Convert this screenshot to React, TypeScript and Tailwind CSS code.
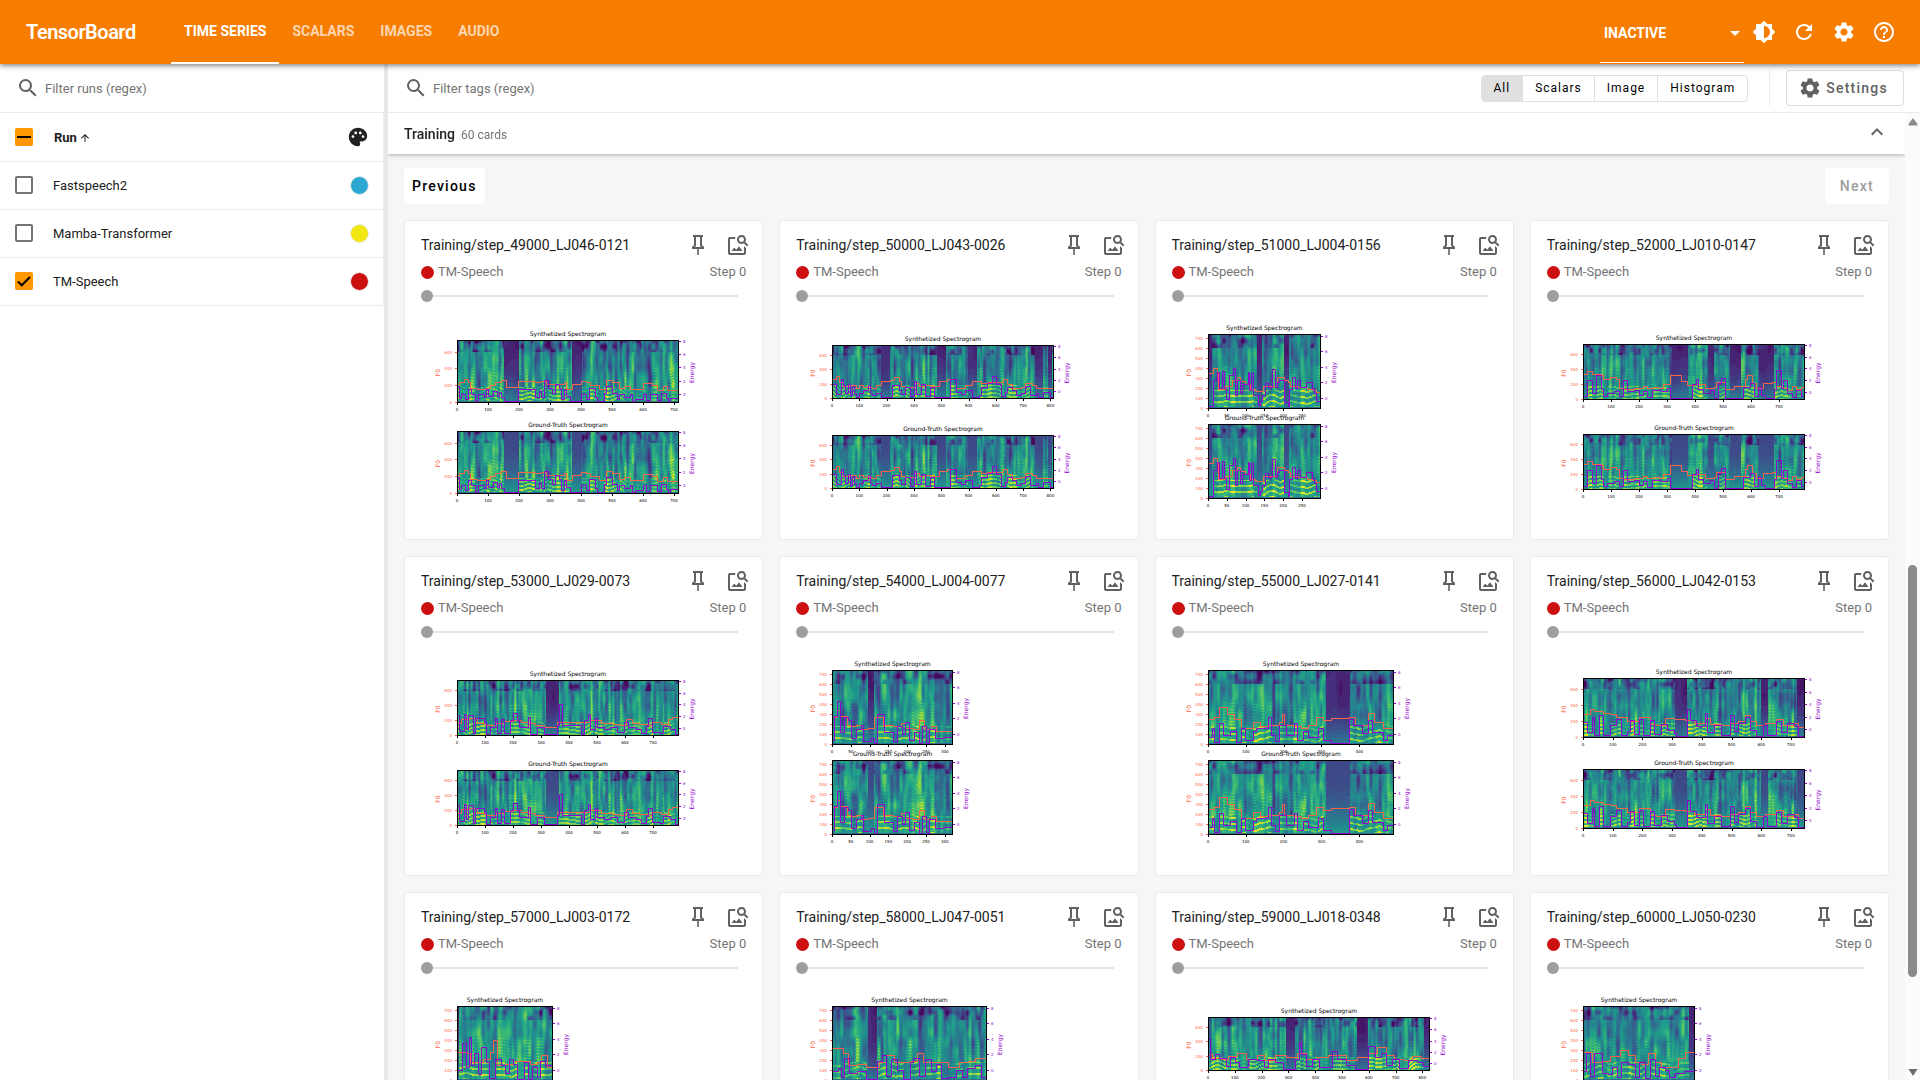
import { useMemo } from "react";
import {
  MdArrowDropDown,
  MdArrowUpward,
  MdBrightness6,
  MdExpandLess,
  MdHelpOutline,
  MdPalette,
  MdRefresh,
  MdSearch,
  MdSettings,
} from "react-icons/md";

/* ---------- spectrogram drawing ---------- */

const VIRIDIS = [
  [68, 1, 84],
  [72, 40, 120],
  [62, 73, 137],
  [49, 104, 142],
  [38, 130, 142],
  [31, 158, 137],
  [53, 183, 121],
  [110, 206, 88],
  [181, 222, 43],
  [253, 231, 37],
];
const LEVELS = 26;

function colorAt(t: number): string {
  const p = Math.min(0.9999, Math.max(0, t)) * (VIRIDIS.length - 1);
  const i = Math.floor(p);
  const f = p - i;
  const c = VIRIDIS[i].map((v, k) => Math.round(v + (VIRIDIS[i + 1][k] - v) * f));
  return `rgb(${c.join(",")})`;
}

function hash(x: number, y: number, seed: number): number {
  const s = Math.sin(x * 127.1 + y * 311.7 + seed * 74.7) * 43758.5453;
  return s - Math.floor(s);
}

function noise(x: number, y: number, seed: number): number {
  const xi = Math.floor(x);
  const yi = Math.floor(y);
  const fx = x - xi;
  const fy = y - yi;
  const u = fx * fx * (3 - 2 * fx);
  const v = fy * fy * (3 - 2 * fy);
  const a = hash(xi, yi, seed) * (1 - u) + hash(xi + 1, yi, seed) * u;
  const b = hash(xi, yi + 1, seed) * (1 - u) + hash(xi + 1, yi + 1, seed) * u;
  return a * (1 - v) + b * v;
}

type Point = [number, number];

function parse(series: string): Point[] {
  return series.split(";").map((p) => p.split(",").map(Number) as Point);
}

function valueAt(points: Point[], x: number): number {
  let v = points[0][1];
  for (const p of points) {
    if (p[0] > x) break;
    v = p[1];
  }
  return v;
}

function spectrogramPaths(w: number, h: number, seed: number, quiet: Point[], energy: Point[], truth: boolean): string[] {
  const paths: string[] = Array(LEVELS).fill("");
  const scale = h > 70 ? 1.3 : 1;
  for (let x = 0; x < w; x++) {
    const px = (x / w) * 100;
    const dark = quiet.some(([a, b]) => px >= a && px < b);
    const e = valueAt(energy, px);
    const column = noise(x / (2 * scale), 0.5, seed + 3);
    const broad = noise(x / (8 * scale), 0.5, seed + 9);
    const voiced = Math.min(1, e / 18) * (0.55 + 0.45 * noise(x / 5, 3.5, seed + 14));
    const bend = Math.round(noise(x / 9, 1.5, seed + 12) * 8);
    let runStart = 0;
    let runLevel = -1;
    for (let y = 0; y <= h; y++) {
      let level = -2;
      if (y < h) {
        const t = 1 - y / h;
        let v: number;
        if (dark) {
          v = truth ? 0.19 + hash(x, y, seed) * 0.05 : 0.05 + noise(x / 6, y / 20, seed) * 0.08;
          v += Math.pow(1 - t, 2.6) * 0.36;
        } else {
          v = 0.3 + column * 0.32 + broad * 0.12 - t * 0.08;
          v += (noise(x / (2.4 * scale), y / 22, seed + 5) - 0.5) * 0.42;
          v += (noise(x / (4 * scale), y / 9, seed + 6) - 0.5) * 0.2;
          if (t > 0.82) v -= Math.max(0, noise(x / (4 * scale), y / 6, seed + 8) - 0.4) * 0.7;
          if (t > 0.24 && t < 0.58 && column > 0.55 && (y + bend) % 3 === 0) v += 0.08;
          if (t < 0.26) {
            const period = h > 70 ? 6 : 4;
            const stripe = (y + bend) % period < 2;
            v = v * 0.55 + 0.2 + (stripe ? 0.4 : 0.04) * voiced;
            if (t < 0.12) v += 0.05 * voiced;
          }
          if (truth) v += (hash(x, y, seed + 2) - 0.5) * 0.08 + 0.02;
        }
        if (t < 0.035) v = 0.28 + column * 0.15;
        level = Math.max(0, Math.min(LEVELS - 1, Math.floor(v * LEVELS)));
      }
      if (level !== runLevel) {
        if (runLevel >= 0) paths[runLevel] += `M${x} ${runStart}h1V${y}h-1z`;
        runStart = y;
        runLevel = level;
      }
    }
  }
  return paths;
}

function stepPath(points: Point[], w: number, h: number, floor = 0): string {
  let d = "";
  points.forEach(([x, y], i) => {
    const px = Math.round((x / 100) * w) + 0.5;
    const py = Math.round(h - (Math.max(floor, y) / 100) * h) - 0.5;
    d += i === 0 ? `M${px} ${py}` : `H${px}V${py}`;
  });
  return `${d}H${w}`;
}

interface PlotProps {
  title: string;
  top: number;
  width: number;
  height: number;
  seed: number;
  quiet: Point[];
  f0: Point[];
  energy: Point[];
  unit: number;
  step: number;
  truth?: boolean;
}

const PLOT_LEFT = 36;

function Plot({ title, top, width: w, height: h, seed, quiet, f0, energy, unit, step, truth = false }: PlotProps) {
  const paths = useMemo(() => spectrogramPaths(w, h, seed, quiet, energy, truth), [w, h, seed, quiet, energy, truth]);
  const fTicks = h > 70 ? [0, 100, 200, 300, 400, 500, 600, 700] : [0, 200, 400, 600];
  const xTicks = Array.from({ length: Math.floor(w / unit - 0.1) + 1 }, (_, i) => i);
  return (
    <g transform={`translate(${PLOT_LEFT} ${top})`} fontFamily="DejaVu Sans, sans-serif">
      <text x={w / 2} y={-4} textAnchor="middle" fontSize={6} fill="#000">
        {title}
      </text>
      <g shapeRendering="crispEdges">
        {paths.map((d, i) => (d ? <path key={i} d={d} fill={colorAt((i + 0.5) / LEVELS)} /> : null))}
      </g>
      <path d={stepPath(f0, w, h)} fill="none" stroke="#ff6347" strokeWidth={1} />
      <path d={stepPath(energy, w, h, 1)} fill="none" stroke="#9400d3" strokeWidth={1} />
      <rect x={0.5} y={0.5} width={w - 1} height={h - 1} fill="none" stroke="#000" strokeWidth={1} />
      {fTicks.map((v) => {
        const y = Math.round(h - (v / 750) * h);
        return (
          <g key={v}>
            <path d={`M-2 ${y - 0.5}h2`} stroke="#ff6347" />
            <text x={-5} y={y + 1} textAnchor="end" fontSize={4} fill="#ff6347">
              {v}
            </text>
          </g>
        );
      })}
      {[0, 2, 4, 6, 8].map((v) => {
        const y = Math.round(h * (0.85 - v * 0.1035));
        return (
          <g key={v}>
            <path d={`M${w} ${y + 0.5}h2`} stroke="#9400d3" />
            <text x={w + 4} y={y + 2} fontSize={4} fill="#9400d3">
              {v}
            </text>
          </g>
        );
      })}
      {xTicks.map((i) => (
        <g key={i}>
          <path d={`M${Math.round(i * unit) + 0.5} ${h}v2`} stroke="#000" />
          <text x={i * unit} y={h + 8} textAnchor="middle" fontSize={4} fill="#000">
            {i * step}
          </text>
        </g>
      ))}
      <text transform={`translate(-17 ${h / 2 + 1}) rotate(-90)`} textAnchor="middle" fontSize={6} fill="#ff6347">
        F0
      </text>
      <text transform={`translate(${w + 15} ${h / 2 + 1}) rotate(-90)`} textAnchor="middle" fontSize={6} fill="#9400d3">
        Energy
      </text>
    </g>
  );
}

/* ---------- data ---------- */

interface CardData {
  tag: string;
  width: number;
  top: number;
  height: number;
  top2: number;
  unit: number;
  step: number;
  quiet: string;
  f0: string;
  energy: string;
}

const CARDS: CardData[] = [
  {
    tag: "Training/step_49000_LJ046-0121",
    width: 222, top: 28, height: 63, top2: 119, unit: 31, step: 100,
    quiet: "21,27.5;51.5,56",
    f0: "0,28;1,32;3,37;5,31;6,22;9,21;13,22;15,27;17,32;20,35;22,24;27.5,33;35,31;38,34;40,29;48,32;49,20;52,29;56,34;58,32;60,27;64,20;67,35;70,31;73,23;75,26;78,21;84,30;88,27;90,19;93,26;94.5,19",
    energy: "0,25;1,6;2,12;3.5,4;5,20;6.5,12;8,2;9.5,12;12,8;13,20;14,10;16,18;18,10;19,16;20,8;21,1;27.5,21;35,8;37,18;38,8;39,35;41,22;43,14;44,28;46,22;47,5;48,20;49,10;51,0.5;56,12;58,4;59.5,22;62,8;63,2;66,14;67,25;70,14;72,4;73,12;75,8;78,12;79,2;80,5;84,12;85,3;87,12;90,3;92,15;94,6;95,2;96,7",
  },
  {
    tag: "Training/step_50000_LJ043-0026",
    width: 222, top: 33, height: 54, top2: 123, unit: 27.3, step: 100,
    quiet: "22,26;47,51;61,65;91,95;97,99",
    f0: "0,36;2,40;3,30;5,22;8,24;11,18;12,24;14,20;18,19;20,24;22,32;26,33;28,38;30,32;31,22;33,20;37,27;39,22;42,24;45,22;48,32;52,36;56,19;60,24;63,31;67,28;70,30;75,30;77,36;79,26;81,19;85,20;87,28;90,24;92,19",
    energy: "0,26;2,8;4,35;5,25;6,10;7,26;8,5;9,22;10,10;11,1;12,10;14,14;16,24;17,10;18,5;20,10;22,0.5;26,2;27,24;30,14;31,8;33,20;35,4;37,32;38,8;40,26;42,4;44,20;46,2;51,1;53,36;56,12;58,8;60,14;63,1;66,5;67,20;70,28;72,40;74,26;76,3;78,12;79,20;81,14;83,5;85,10;87,22;89,5;92,10;93,0;95,12;98,0",
  },
  {
    tag: "Training/step_51000_LJ004-0156",
    width: 113, top: 22, height: 75, top2: 112, unit: 18.8, step: 50,
    quiet: "0,3;43,47;67,71",
    f0: "0,47;4,53;8,47;9,26;15,30;21,38;26,42;28,36;33,32;37,26;42,23;49,29;58,30;61,41;67,38;71,35;73,30;80,28;88,26;92,24;96,21",
    energy: "0,3;4,37;8,48;10,27;12,49;14,27;16,12;19,44;22,54;24,18;26,37;28,20;30,32;35,48;36,24;38,47;40,18;44,4;46,10;48,18;50,33;53,28;57,52;59,28;61,35;63,37;67,8;71,3;72,26;74,42;77,27;79,37;81,28;87,35;92,27;94,20;96,10",
  },
  {
    tag: "Training/step_52000_LJ010-0147",
    width: 222, top: 32, height: 56, top2: 122, unit: 28, step: 100,
    quiet: "40,47;56,59;66,71;79,86",
    f0: "0,45;2,50;4,45;8,42;9,35;12,39;15,36;16,20;18,18;23,20;27,24;29,19;32,22;34,19;36,26;39,43;44,33;47,25;50,26;55,20;59,22;60,31;64,18;68,24;73,36;74,42;76,28;78,20;81,28;85,30;87,24;89,20;92,16;94,24;96,18;98,22",
    energy: "0,5;2,34;4,10;6,42;8,18;9,5;11,10;14,14;16,6;18,34;20,14;23,16;25,8;27,14;29,3;31,16;35,14;38,20;39,0.5;48,1;49,26;51,35;52,18;54,10;57,16;59,1;61,28;62,38;64,1;71,2;72,22;75,28;77,6;79,22;80,8;82,2;86,18;87,52;89,20;90,34;92,10;94,3;96,16;98,6",
  },
  {
    tag: "Training/step_53000_LJ029-0073",
    width: 222, top: 32, height: 56, top2: 122, unit: 28, step: 100,
    quiet: "40,45.5",
    f0: "0,22;2,28;6,30;9,22;12,20;13,18;17,22;21,25;25,26;29,24;32,22;35,18;39,14;45,23;55,23;60,26;65,22;70,20;73,18;76,28;79,22;82,20;86,18;88,24;92,20;95,28;97,32",
    energy: "0,36;1,8;3,38;4,10;5,36;7,4;8,30;12,24;13,2;15,14;17,30;18,3;20,28;21,3;24,26;25,40;27,26;28,14;32,32;33,2;36,14;39,0.5;45,18;46,55;47.5,17;56,0;57,26;59,38;60,10;62,30;63,15;66,10;69,14;72,6;75,24;77,14;80,10;83,3;85,16;86,30;88,6;91,3;93,16;96,10;98,2",
  },
  {
    tag: "Training/step_54000_LJ004-0077",
    width: 121, top: 22, height: 75, top2: 112, unit: 18.8, step: 50,
    quiet: "29,34",
    f0: "0,36;4,46;7,38;12,26;16,24;20,26;24,20;30,22;35,36;42,26;50,24;57,28;60,22;67,20;72,32;76,20;82,24;86,18",
    energy: "0,6;2,38;4,58;7,16;10,36;13,32;16,8;20,20;24,26;26,4;32,8;35,2;37,40;43,16;50,4;54,24;58,14;60,30;64,6;68,16;72,2;74,24;78,2;80,20;85,8;92,10",
  },
  {
    tag: "Training/step_55000_LJ027-0141",
    width: 186, top: 22, height: 75, top2: 112, unit: 37.8, step: 100,
    quiet: "63,76",
    f0: "0,34;3,36;6,49;10,40;14,33;18,22;24,29;28,24;33,26;38,30;40,40;41,26;47,24;50,22;54,26;58,36;62,32;66,35;76,36;79,26;86,42;89,30;94,22",
    energy: "0,10;2,22;3,3;6,28;8,12;12,18;15,3;18,22;20,5;24,18;26,22;32,36;34,12;36,4;38,26;42,12;46,28;48,5;51,18;54,10;59,22;62,6;66,1;76,33;78,25;83,15;86,32;88,16;94,6;96,12",
  },
  {
    tag: "Training/step_56000_LJ042-0153",
    width: 222, top: 30, height: 60, top2: 121, unit: 29.7, step: 100,
    quiet: "41,46.5;80,83;96,100",
    f0: "0,38;3,46;5,43;9,40;12,38;15,33;20,26;25,33;30,22;33,20;37,32;41,30;46,28;50,24;55,32;57,22;62,20;66,24;70,26;73,36;75,26;78,20;82,24;87,30;90,20;95,24;97,17",
    energy: "0,25;2,8;4,34;5,4;7,36;9,3;12,20;15,30;17,4;20,10;21,28;23,5;25,30;27,4;30,28;32,5;35,22;38,12;41,6;42,1;47,46;48,28;51,18;55,40;56,8;59,20;62,3;66,36;68,10;70,24;73,34;75,12;78,2;81,20;83,3;87,26;89,8;92,24;95,18;97,0",
  },
  {
    tag: "Training/step_57000_LJ003-0172",
    width: 96, top: 22, height: 75, top2: 112, unit: 18.8, step: 50,
    quiet: "0,2",
    f0: "0,38;10,36;14,24;27,28;34,38;38,54;42,20;50,22;58,26;68,26;76,22;83,24;88,34;94,18",
    energy: "0,14;5,50;9,18;12,57;15,20;18,36;22,8;25,44;30,24;33,3;40,28;46,20;50,10;54,28;58,22;62,2;70,24;74,2;78,18;83,4;86,26;92,20",
  },
  {
    tag: "Training/step_58000_LJ047-0051",
    width: 155, top: 22, height: 75, top2: 112, unit: 31, step: 100,
    quiet: "23,29",
    f0: "0,43;7,36;10,20;16,22;22,17;30,24;35,34;40,24;50,26;55,36;59,24;68,24;75,18;82,24;88,26;92,30",
    energy: "0,12;4,16;6,4;8,30;11,10;16,12;20,12;22,1;29,26;32,34;35,6;38,28;42,14;46,2;50,24;52,30;56,6;60,28;64,12;67,22;70,3;75,4;80,14;84,4;87,16;92,20;96,4",
  },
  {
    tag: "Training/step_59000_LJ018-0348",
    width: 222, top: 33, height: 54, top2: 123, unit: 26.8, step: 100,
    quiet: "35,39;67,72;97,100",
    f0: "0,30;2,22;6,20;9,26;13,32;17,20;22,28;25,18;30,28;35,24;40,32;44,20;49,24;54,28;58,28;62,18;67,24;72,32;76,42;80,28;84,20;88,18;92,26;96,22",
    energy: "0,58;1,20;3,30;5,22;8,8;10,24;12,14;14,5;18,20;22,18;25,6;27,20;30,14;34,0;39,20;41,52;42,30;44,8;47,20;50,5;56,36;58,20;62,10;66,1;72,44;75,24;78,32;80,10;83,20;86,4;90,18;94,14;97,8",
  },
  {
    tag: "Training/step_60000_LJ050-0230",
    width: 112, top: 22, height: 75, top2: 112, unit: 18.8, step: 50,
    quiet: "94,100",
    f0: "0,38;8,24;16,26;24,32;33,40;40,34;46,24;52,22;58,36;64,24;70,18;80,18;85,30;91,38",
    energy: "0,12;3,36;6,5;10,36;17,10;22,8;26,18;30,4;34,24;40,22;46,4;50,24;55,3;60,28;64,6;68,18;73,14;77,4;82,10;90,12",
  },
];

const RUNS = [
  { name: "Fastspeech2", color: "bg-[#2ba7d1]", checked: false },
  { name: "Mamba-Transformer", color: "bg-[#f2e711]", checked: false },
  { name: "TM-Speech", color: "bg-[#cc1010]", checked: true },
];

/* ---------- icons ---------- */

function PinIcon() {
  return (
    <svg viewBox="0 0 24 24" className="size-6" fill="currentColor" aria-hidden="true">
      <path d="M16,12V4H17V2H7V4H8V12L6,14V16H11.2V22H12.8V16H18V14L16,12M8.8,14L10,12.8V4H14V12.8L15.2,14H8.8Z" />
    </svg>
  );
}

function ImageSearchIcon() {
  return (
    <svg viewBox="0 0 24 24" className="size-6" fill="currentColor" aria-hidden="true">
      <path d="M18 13v7H4V6h5.02c.05-.71.22-1.38.48-2H4c-1.1 0-2 .9-2 2v14c0 1.100.9 2 2 2h14c1.100 0 2-.9 2-2v-5l-2-2zm-1.500 5h-11l2.750-3.530 1.960 2.360 2.750-3.540zm2.800-9.110c.440-.7.7-1.510.7-2.390C20 4.010 17.990 2 15.500 2S11 4.010 11 6.500s2.010 4.500 4.490 4.500c.880 0 1.700-.260 2.390-.7L21 13.420 22.420 12 19.300 8.890zM15.500 9C14.120 9 13 7.880 13 6.500S14.120 4 15.500 4 18 5.120 18 6.500 16.880 9 15.500 9z" />
    </svg>
  );
}

/* ---------- page parts ---------- */

function TopBar() {
  return (
    <header className="relative z-20 flex h-16 shrink-0 items-center bg-[#f77d00] pr-4 pl-[26px] text-white shadow-[0_1px_6px_rgba(0,0,0,0.6)]">
      <h1 className="w-[145px] text-xl font-semibold tracking-tight">TensorBoard</h1>
      <nav className="flex h-full text-sm font-bold">
        <a href="#timeseries" className="flex items-center border-b-2 border-white px-[13px]">
          TIME SERIES
        </a>
        <a href="#scalars" className="flex items-center border-b-2 border-transparent px-[13px] text-white/70">
          SCALARS
        </a>
        <a href="#images" className="flex items-center border-b-2 border-transparent px-[13px] text-white/70">
          IMAGES
        </a>
        <a href="#audio" className="flex items-center border-b-2 border-transparent px-[13px] text-white/70">
          AUDIO
        </a>
      </nav>
      <div className="relative mt-0.5 ml-auto flex h-[59px] w-36 items-center border-b border-white">
        <select aria-label="Inactive dashboards" className="w-full appearance-none bg-transparent pl-1 text-sm font-bold text-white outline-none">
          <option>INACTIVE</option>
        </select>
        <MdArrowDropDown className="pointer-events-none absolute -right-[3px] size-6" />
      </div>
      <div className="flex">
        <button aria-label="Toggle theme" className="flex size-10 items-center justify-center">
          <MdBrightness6 className="size-6" />
        </button>
        <button aria-label="Reload" className="flex size-10 items-center justify-center">
          <MdRefresh className="size-6" />
        </button>
        <button aria-label="Settings" className="flex size-10 items-center justify-center">
          <MdSettings className="size-6" />
        </button>
        <button aria-label="Help" className="flex size-10 items-center justify-center">
          <MdHelpOutline className="size-6" />
        </button>
      </div>
    </header>
  );
}

function Filter({ label }: { label: string }) {
  return (
    <label className="flex flex-1 items-center gap-[5px] pl-4 text-[#616161]">
      <MdSearch className="size-6 shrink-0" />
      <input
        type="text"
        placeholder={label}
        aria-label={label}
        className="w-full pt-0.5 text-[13px] text-[#212121] outline-none placeholder:text-[#757575]"
      />
    </label>
  );
}

function CheckBox({ label, state }: { label: string; state: "off" | "on" | "mixed" }) {
  return (
    <span className="relative flex size-[18px] shrink-0">
      <input
        type="checkbox"
        aria-label={label}
        defaultChecked={state !== "off"}
        className="size-[18px] appearance-none rounded-xs border-2 border-[#757575] bg-white checked:border-[#ff9800] checked:bg-[#ff9800]"
      />
      {state !== "off" && (
        <svg viewBox="0 0 18 18" className="pointer-events-none absolute inset-0 size-[18px]" fill="none" stroke="#000" strokeWidth={2} aria-hidden="true">
          <path d={state === "on" ? "M3 9.500l3.800 3.800L15 5" : "M2 9h14"} />
        </svg>
      )}
    </span>
  );
}

function Sidebar() {
  return (
    <aside className="flex w-1/5 shrink-0 flex-col bg-white">
      <div className="flex h-[49px] shrink-0 border-b border-[#ebebeb]">
        <Filter label="Filter runs (regex)" />
      </div>
      <table className="w-full table-fixed border-r border-[#ebebeb] text-[13px] text-[#212121]">
        <thead>
          <tr className="h-12 border-b border-[#ebebeb]">
            <th className="w-[53px] pl-[15px]">
              <CheckBox label="Select all runs" state="mixed" />
            </th>
            <th className="pt-0.5 pl-px text-left">
              <span className="flex items-center gap-0.5 font-bold">
                Run <MdArrowUpward className="size-3" />
              </span>
            </th>
            <th className="w-12 pr-3.5">
              <button aria-label="Color runs by" className="ml-auto flex">
                <MdPalette className="size-[22px]" />
              </button>
            </th>
          </tr>
        </thead>
        <tbody>
          {RUNS.map((run) => (
            <tr key={run.name} className="h-12 border-b border-[#ebebeb]">
              <td className="pl-[15px]">
                <CheckBox label={run.name} state={run.checked ? "on" : "off"} />
              </td>
              <td className="pt-0.5">{run.name}</td>
              <td className="pr-3.5">
                <button
                  aria-label={`Color of ${run.name}`}
                  className={`ml-auto block size-[19px] rounded-full border border-[#ebebeb] ${run.color}`}
                />
              </td>
            </tr>
          ))}
        </tbody>
      </table>
    </aside>
  );
}

function FilterBar() {
  return (
    <div className="flex h-[49px] shrink-0 items-center border-b border-[#ebebeb] bg-white pr-4">
      <Filter label="Filter tags (regex)" />
      <div className="flex h-[27px] overflow-hidden rounded border border-[#e0e0e0] text-xs tracking-[1px] text-black">
        <button className="bg-[#e0e0e0] px-3">All</button>
        <button className="border-l border-[#e0e0e0] px-3">Scalars</button>
        <button className="border-l border-[#e0e0e0] px-3">Image</button>
        <button className="border-l border-[#e0e0e0] px-3">Histogram</button>
      </div>
      <div className="mx-4 ml-[21px] h-9 w-px bg-[#ebebeb]" />
      <button className="flex h-9 items-center gap-1 rounded border border-[#dadce0] pr-[15px] pl-[11px] text-sm font-medium tracking-[1.25px] text-[#616161]">
        <MdSettings className="size-6" />
        Settings
      </button>
    </div>
  );
}

function ImageCard({ card, index }: { card: CardData; index: number }) {
  const parsed = useMemo(
    () => ({ quiet: parse(card.quiet), f0: parse(card.f0), energy: parse(card.energy) }),
    [card],
  );
  const plot = { width: card.width, height: card.height, seed: index * 13 + 1, unit: card.unit, step: card.step, ...parsed };
  return (
    <article className="flex h-80 flex-col overflow-hidden rounded border border-[#ebebeb] bg-white px-4 pt-1">
      <div className="-mr-3 flex h-[39px] items-center text-[#616161]">
        <h3 className="flex-1 truncate text-sm text-[#212121]">{card.tag}</h3>
        <button aria-label="Pin card" className="flex size-10 items-center justify-center">
          <PinIcon />
        </button>
        <button aria-label="Toggle actual image size" className="flex size-10 items-center justify-center">
          <ImageSearchIcon />
        </button>
      </div>
      <div className="flex h-4 items-center text-[13px] text-[#757575]">
        <span className="mr-1 size-[13px] rounded-full bg-[#cc1010]" />
        <span className="flex-1">TM-Speech</span>
        <span>Step 0</span>
      </div>
      <input
        type="range"
        min={0}
        max={10}
        defaultValue={0}
        aria-label={`Step of ${card.tag}`}
        className="mt-2.5 mr-2 h-3 appearance-none bg-transparent [&::-webkit-slider-runnable-track]:h-0.5 [&::-webkit-slider-runnable-track]:bg-[#e7e7e7] [&::-webkit-slider-thumb]:-mt-[5px] [&::-webkit-slider-thumb]:size-3 [&::-webkit-slider-thumb]:appearance-none [&::-webkit-slider-thumb]:rounded-full [&::-webkit-slider-thumb]:bg-[#9e9e9e]"
      />
      <svg width={326} height={210} viewBox="0 0 326 210" className="mt-2.5 shrink-0" role="img" aria-label={card.tag}>
        <Plot title="Synthetized Spectrogram" top={card.top} {...plot} />
        <Plot title="Ground-Truth Spectrogram" top={card.top2} truth {...plot} />
      </svg>
    </article>
  );
}

function ScrollBar() {
  return (
    <div className="flex w-[15px] shrink-0 flex-col items-center bg-[#fbfbfb] py-1" aria-hidden="true">
      <svg viewBox="0 0 10 8" className="mt-px h-2 w-2.5" fill="#8b8b8b">
        <path d="M5 0l4.500 6v1.500h-9V6z" />
      </svg>
      <div className="grow-[438]" />
      <div className="w-[9px] grow-[411] rounded-full bg-[#8b8b8b]" />
      <div className="grow-[91]" />
      <svg viewBox="0 0 10 8" className="h-2 w-2.5" fill="#6b6b6b">
        <path d="M5 8L.5 1h9z" />
      </svg>
    </div>
  );
}

export default function App() {
  return (
    <div className="flex h-screen flex-col overflow-hidden bg-white font-[Roboto,sans-serif] text-[#212121]">
      <TopBar />
      <div className="flex min-h-0 flex-1">
        <Sidebar />
        <div className="w-1 shrink-0 bg-[#e8e8e8]" />
        <main className="flex min-w-0 flex-1 flex-col">
          <FilterBar />
          <div className="flex min-h-0 flex-1">
            <section className="min-w-0 flex-1 overflow-y-auto bg-[#f5f6f8] [scrollbar-width:none]">
              <div className="sticky top-0 z-10 flex h-[41px] items-center bg-white pr-4 pl-4 shadow-[0_1px_4px_rgba(0,0,0,0.3)]">
                <h2 className="text-sm font-medium">Training</h2>
                <span className="ml-1.5 flex-1 pt-0.5 text-xs text-[#757575]">60 cards</span>
                <button aria-label="Collapse group" className="mb-1 text-[#616161]">
                  <MdExpandLess className="size-6" />
                </button>
              </div>
              <div className="flex justify-between px-4 pt-3.5 pb-4 text-sm font-medium tracking-[1.25px]">
                <button className="h-9 rounded bg-white px-2 text-black">Previous</button>
                <button disabled className="h-9 rounded bg-white px-[15px] text-[#9e9e9e]">
                  Next
                </button>
              </div>
              <div className="grid grid-cols-4 gap-4 px-4 pb-4">
                {CARDS.map((card, i) => (
                  <ImageCard key={card.tag} card={card} index={i} />
                ))}
              </div>
            </section>
            <ScrollBar />
          </div>
        </main>
      </div>
    </div>
  );
}
